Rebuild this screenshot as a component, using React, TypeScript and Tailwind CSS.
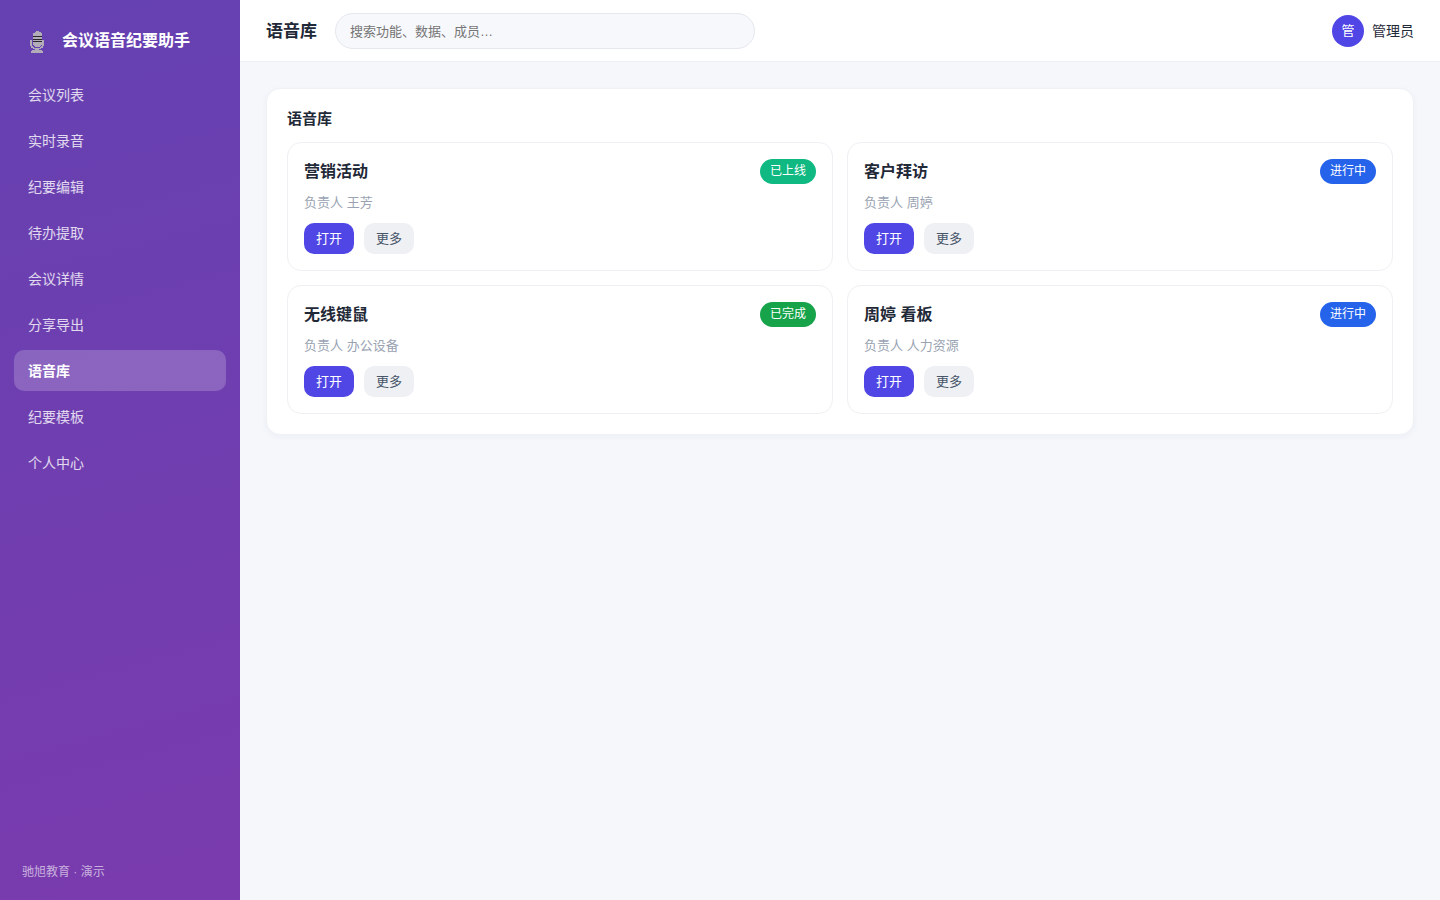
import { useState } from "react";
import clsx from "clsx";

interface VoiceCard {
  id: number;
  name: string;
  owner: string;
  status: keyof typeof STATUS_COLORS;
}

const STATUS_COLORS = {
  已上线: "bg-[#10b981]",
  已完成: "bg-[#16a34a]",
  进行中: "bg-[#2563eb]",
};

const NAV_ITEMS = [
  "会议列表",
  "实时录音",
  "纪要编辑",
  "待办提取",
  "会议详情",
  "分享导出",
  "语音库",
  "纪要模板",
  "个人中心",
];

const CARDS: VoiceCard[] = [
  { id: 1, name: "营销活动", owner: "王芳", status: "已上线" },
  { id: 2, name: "客户拜访", owner: "周婷", status: "进行中" },
  { id: 3, name: "无线键鼠", owner: "办公设备", status: "已完成" },
  { id: 4, name: "周婷 看板", owner: "人力资源", status: "进行中" },
];

const MicIcon = () => (
  <svg width="14" height="22" viewBox="0 0 14 22" shapeRendering="crispEdges" aria-hidden="true">
    <path d="M5 1h1V0h3v1h2v1h1v12h-1v1h-1v1H5v-1H4v-1H3V2h2z" fill="#b2acb9" />
    <path d="M0 9h2v6h1v1h1v1h6v-1h1v-1h1V9h2v6h-1v2h-2v1H9v1h3v1h1v2H1v-2h1v-1h3v-1H3v-1H1v-2H0z" fill="#b2acb9" />
    <path d="M3 5h9v1H3zM3 8h9v1H3zM3 10h9v1H3z" fill="#29272d" />
  </svg>
);

const Sidebar = ({ active, onSelect }: { active: string; onSelect: (item: string) => void }) => (
  <aside className="flex w-60 shrink-0 flex-col bg-[linear-gradient(165deg,#6541b1,#7a3bae)] px-3.5 pt-6 pb-5 text-white">
    <div className="flex h-[34px] items-center gap-[18px] pl-4">
      <span className="pt-0.5">
        <MicIcon />
      </span>
      <span className="text-base font-bold">会议语音纪要助手</span>
    </div>
    <nav className="mt-4 flex flex-col gap-[5px]">
      {NAV_ITEMS.map((item) => (
        <a
          key={item}
          href="#"
          onClick={() => onSelect(item)}
          className={clsx(
            "flex h-[41px] items-center rounded-[10px] px-3.5 text-sm",
            item === active ? "bg-white/20 font-bold text-white" : "text-white/80 hover:bg-white/10"
          )}
        >
          {item}
        </a>
      ))}
    </nav>
    <div className="mt-auto pl-2 text-xs leading-4 text-white/60">驰旭教育 · 演示</div>
  </aside>
);

const Header = ({ title }: { title: string }) => (
  <header className="flex items-center gap-[18px] border-b border-[#eceef3] bg-white px-[26px] pt-[13px] pb-3">
    <h1 className="shrink-0 pt-0.5 text-[17px] font-bold">{title}</h1>
    <input
      type="search"
      aria-label="搜索"
      placeholder="搜索功能、数据、成员…"
      className="h-9 w-full max-w-[420px] rounded-full border border-[#e5e7ef] bg-[#f7f8fc] px-3.5 text-[13px] outline-none placeholder:text-[#757575]"
    />
    <div className="ml-auto flex shrink-0 items-center gap-2 text-sm">
      <span className="flex size-8 items-center justify-center rounded-full bg-[#4f46e5] text-[13px] text-white">管</span>
      <span>管理员</span>
    </div>
  </header>
);

const Card = ({ card }: { card: VoiceCard }) => (
  <article className="rounded-[14px] border border-[#eef0f3] bg-white p-4">
    <div className="flex h-[25px] items-center justify-between">
      <h3 className="text-base font-bold">{card.name}</h3>
      <span className={clsx("rounded-full px-2.5 text-xs leading-[25px] text-white", STATUS_COLORS[card.status])}>
        {card.status}
      </span>
    </div>
    <p className="mt-2 text-[13px] leading-[21px] text-[#9aa3b2]">负责人 {card.owner}</p>
    <div className="mt-2.5 flex gap-2.5 text-[13px] leading-[31px]">
      <button type="button" className="rounded-[10px] bg-[#4f46e5] px-3 text-white">
        打开
      </button>
      <button type="button" className="rounded-[10px] bg-[#eef0f4] px-3 text-[#475569]">
        更多
      </button>
    </div>
  </article>
);

export default function App() {
  const [active, setActive] = useState("语音库");

  return (
    <div className="flex min-h-screen bg-[#f5f7fb] font-['Liberation_Sans','Noto_Sans_CJK_SC',sans-serif] text-[#1f2937]">
      <Sidebar active={active} onSelect={setActive} />
      <div className="min-w-0 flex-1">
        <Header title={active} />
        <main className="p-[26px]">
          <section className="rounded-[14px] border border-[#eff1f5] bg-white p-5 shadow-[0_2px_6px_rgba(30,41,90,0.04)]">
            <h2 className="mb-[13px] text-[15px] leading-5 font-bold">{active}</h2>
            <div className="grid grid-cols-2 gap-3.5">
              {CARDS.map((card) => (
                <Card key={card.id} card={card} />
              ))}
            </div>
          </section>
        </main>
      </div>
    </div>
  );
}
